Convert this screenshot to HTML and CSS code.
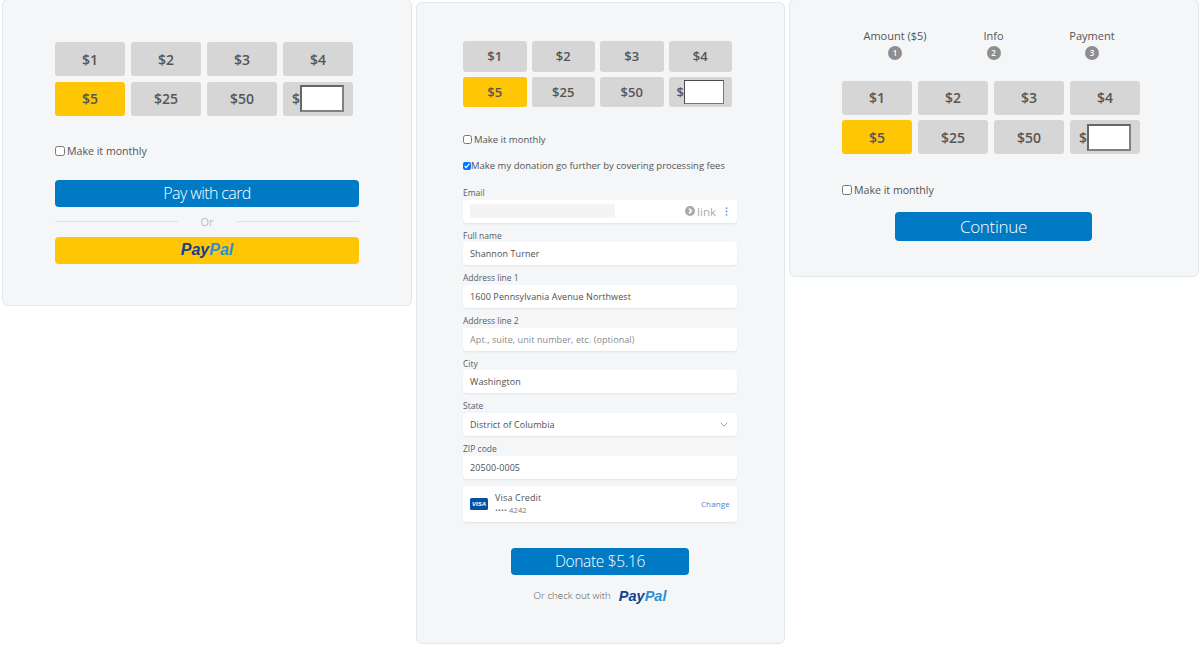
FILE: index.html
```html
<!DOCTYPE html>
<html lang="en">
<head>
<meta charset="utf-8">
<title>Donate</title>
<link rel="stylesheet" href="styles.css">
</head>
<body>
<div class="page">
  <section class="card card-a">
    <div class="amounts">
      <div class="amt">$1</div><div class="amt">$2</div><div class="amt">$3</div><div class="amt">$4</div>
      <div class="amt on">$5</div><div class="amt">$25</div><div class="amt">$50</div>
      <div class="amt other"><span>$</span><input class="other-input" type="text" aria-label="Other amount"></div>
    </div>
    <label class="check monthly"><input type="checkbox">Make it monthly</label>
    <div class="btn btn-pay">Pay with card</div>
    <div class="or"><span>Or</span></div>
    <div class="btn btn-paypal"><span class="pp"><b>Pay</b><i>Pal</i></span></div>
  </section>

  <section class="card card-b">
    <div class="amounts">
      <div class="amt">$1</div><div class="amt">$2</div><div class="amt">$3</div><div class="amt">$4</div>
      <div class="amt on">$5</div><div class="amt">$25</div><div class="amt">$50</div>
      <div class="amt other"><span>$</span><input class="other-input" type="text" aria-label="Other amount"></div>
    </div>
    <label class="check monthly"><input type="checkbox">Make it monthly</label>
    <label class="check fees"><input type="checkbox" checked>Make my donation go further by covering processing fees</label>
    <div class="field">
      <div class="lbl">Email</div>
      <div class="box">
        <span class="mask"></span>
        <span class="link">
          <svg class="link-ic" viewBox="0 0 10 10"><circle cx="5" cy="5" r="5" fill="#a9a9a9"/><path d="M4 2.6 6.4 5 4 7.4" fill="none" stroke="#fff" stroke-width="1.6"/></svg>link
        </span>
        <svg class="dots" viewBox="0 0 3 9"><circle cx="1.5" cy="1.2" r=".9"/><circle cx="1.5" cy="4.5" r=".9"/><circle cx="1.5" cy="7.8" r=".9"/></svg>
      </div>
    </div>
    <div class="field"><div class="lbl">Full name</div><div class="box">Shannon Turner</div></div>
    <div class="field"><div class="lbl">Address line 1</div><div class="box">1600 Pennsylvania Avenue Northwest</div></div>
    <div class="field"><div class="lbl">Address line 2</div><div class="box ph">Apt., suite, unit number, etc. (optional)</div></div>
    <div class="field"><div class="lbl">City</div><div class="box">Washington</div></div>
    <div class="field"><div class="lbl">State</div>
      <div class="box">District of Columbia
        <svg class="chev" viewBox="0 0 8 5"><path d="M.7.8 4 4 7.3.8" fill="none" stroke="#8a8f96" stroke-width=".8"/></svg>
      </div>
    </div>
    <div class="field"><div class="lbl">ZIP code</div><div class="box">20500-0005</div></div>
    <div class="pay-card">
      <span class="visa">VISA</span>
      <div class="pay-info"><div class="pay-name">Visa Credit</div><div class="pay-num">•••• 4242</div></div>
      <span class="change">Change</span>
    </div>
    <div class="btn btn-donate">Donate $5.16</div>
    <div class="alt">Or check out with <span class="pp"><b>Pay</b><i>Pal</i></span></div>
  </section>

  <section class="card card-c">
    <div class="steps">
      <div class="step">Amount ($5)<span class="num">1</span></div>
      <div class="step">Info<span class="num">2</span></div>
      <div class="step">Payment<span class="num">3</span></div>
    </div>
    <div class="amounts">
      <div class="amt">$1</div><div class="amt">$2</div><div class="amt">$3</div><div class="amt">$4</div>
      <div class="amt on">$5</div><div class="amt">$25</div><div class="amt">$50</div>
      <div class="amt other"><span>$</span><input class="other-input" type="text" aria-label="Other amount"></div>
    </div>
    <label class="check monthly"><input type="checkbox">Make it monthly</label>
    <div class="btn btn-continue">Continue</div>
  </section>
</div>
</body>
</html>
```
FILE: styles.css
```css
* { box-sizing: border-box; }
html, body { margin: 0; padding: 0; background: #fff; }
body {
  font-family: "Open Sans", "Liberation Sans", sans-serif;
  color: #4f4f4f;
  height: 652px;
  overflow: hidden;
}
.page {
  display: flex;
  align-items: flex-start;
  gap: 4px;
  padding-left: 2px;
}
.card {
  flex: none;
  background: #f4f6f8;
  border: 1px solid #dfe8eb;
  border-radius: 6px;
}
.card-a { width: 410px; height: 307px; margin-top: -1px; padding: 42px 52px 0; }
.card-b { width: 369px; height: 642px; margin-top: 2px; padding: 38px 46px 0; }
.card-c { width: 410px; height: 278px; margin-top: -1px; padding: 29px 52px 0; }

.amounts {
  display: grid;
  grid-template-columns: repeat(4, 70px);
  grid-auto-rows: 34px;
  column-gap: 6px;
  row-gap: 5.5px;
}
.amt {
  display: flex;
  align-items: center;
  justify-content: center;
  background: #d6d6d6;
  border-radius: 3px;
  font-size: 14px;
  font-weight: 600;
  color: #555;
}
.amt.on { background: #ffc605; }
.amt.other { justify-content: flex-start; padding-left: 9px; }
.other-input {
  width: 44px;
  height: 27px;
  margin: 0;
  padding: 0;
  background: #fff;
  border-radius: 0;
  border: 2px solid #808080;
  border-top-color: #666;
  border-left-color: #666;
}
.check {
  display: flex;
  align-items: center;
  white-space: nowrap;
  font-size: 10.6px;
  line-height: 15px;
  color: #555;
}
.check input {
  width: 10px;
  height: 10px;
  margin: 0 2px 0 0;
  flex: none;
}
.card-a .monthly { margin-top: 28px; }
.card-c .monthly { margin-top: 28.5px; }

.btn {
  display: flex;
  align-items: center;
  justify-content: center;
  border-radius: 4px;
  color: #fff;
}
.btn-pay {
  margin-top: 21px;
  width: 304px;
  height: 27px;
  background: #007ac5;
  font-size: 16px;
  font-weight: 350;
  letter-spacing: -.6px;
}
.or {
  display: flex;
  align-items: center;
  gap: 22px;
  width: 304px;
  height: 30px;
  font-size: 11px;
  color: #bcbcbc;
  line-height: 14px;
  justify-content: center;
}
.or::before, .or::after { content: ""; flex: 1; height: 1px; background: #dfe3e6; }
.btn-paypal {
  width: 304px;
  height: 27px;
  background: #ffc605;
}
.pp {
  font-family: "Liberation Sans", Arial, sans-serif;
  font-weight: 700;
  font-style: italic;
  font-size: 16px;
  letter-spacing: 0;
}
.pp b { color: #123f8c; }
.pp i { color: #2f8fd4; }

.card-b .amounts {
  grid-template-columns: repeat(4, 63.5px);
  grid-auto-rows: 30.5px;
  column-gap: 5px;
  row-gap: 5px;
}
.card-b .amt { font-size: 13px; }
.card-b .amt.other { padding-left: 8px; }
.card-b .other-input { width: 40px; height: 24px; border-width: 1px; border-color: #4a4a4a #777 #777 #4a4a4a; }
.card-b .monthly { margin-top: 25px; }
.card-b .fees { margin-top: 11px; }
.card-b .check { font-size: 9.5px; line-height: 15px; }
.card-b .check input { margin-right: 2px; width: 9px; height: 9px; }
.card-b .fees input { margin-right: 0; width: 8px; height: 8px; }

.field { width: 274px; }
.fees + .field { margin-top: 14px; }
.field .lbl {
  font-size: 8.5px;
  line-height: 11px;
  height: 12.5px;
  color: #5c5c5c;
}
.box {
  position: relative;
  display: flex;
  align-items: center;
  height: 23px;
  padding: 0 7px;
  margin-bottom: 7.2px;
  background: #fff;
  border-radius: 4px;
  box-shadow: 0 1px 2px rgba(0, 0, 0, .08);
  font-size: 9px;
  color: #4f4f4f;
  letter-spacing: .01em;
}
.box.ph { color: #8a8a8a; }
.mask { width: 145px; height: 14px; background: #f4f4f4; }
.link {
  display: flex;
  align-items: center;
  gap: 2px;
  margin-left: auto;
  margin-right: 9px;
  font-size: 11.5px;
  font-weight: 500;
  color: #a9a9a9;
  letter-spacing: 0;
}
.link-ic { width: 10px; height: 10px; }
.dots { width: 3px; height: 9px; fill: #6f8fe0; margin-right: 2px; }
.chev { width: 8px; height: 5px; margin-left: auto; margin-right: 2px; }

.pay-card {
  display: flex;
  align-items: center;
  width: 274px;
  height: 36px;
  padding: 0 7px;
  background: #fff;
  border-radius: 4px;
  box-shadow: 0 1px 2px rgba(0, 0, 0, .08);
}
.visa {
  width: 18px;
  height: 12px;
  background: #0a4f9e;
  border-radius: 1.5px;
  color: #fff;
  font-family: "Liberation Sans", Arial, sans-serif;
  font-size: 6px;
  font-weight: 700;
  font-style: italic;
  line-height: 12px;
  text-align: center;
}
.pay-info { margin-left: 7px; letter-spacing: .01em; }
.pay-name { font-size: 9px; line-height: 12px; color: #555; }
.pay-num { font-size: 7.5px; line-height: 12px; color: #777; }
.change { margin-left: auto; font-size: 8px; color: #4a7fd6; letter-spacing: .02em; }

.btn-donate {
  width: 178px;
  height: 27px;
  margin: 26px 0 0 48px;
  background: #007ac5;
  font-size: 15.5px;
  font-weight: 350;
  letter-spacing: -.35px;
}
.alt {
  display: flex;
  align-items: center;
  justify-content: center;
  gap: 8px;
  width: 274px;
  margin-top: 11.5px;
  height: 19px;
  font-size: 9.8px;
  font-weight: 300;
  color: #555;
}
.alt .pp { font-size: 14.5px; }

.steps {
  display: grid;
  grid-template-columns: repeat(3, 98.5px);
  margin-left: 3.75px;
}
.step {
  display: flex;
  flex-direction: column;
  align-items: center;
  font-size: 11px;
  line-height: 14px;
  color: #555;
}
.num {
  display: flex;
  align-items: center;
  justify-content: center;
  width: 14px;
  height: 14px;
  margin-top: 3px;
  border-radius: 50%;
  background: #8e8e8e;
  color: #fff;
  font-size: 8px;
  font-weight: 600;
}
.card-c .amounts { margin-top: 20.5px; }
.btn-continue {
  width: 197px;
  height: 29.5px;
  margin: 14px 0 0 53px;
  background: #007ac5;
  font-size: 17px;
  font-weight: 350;
  letter-spacing: -.3px;
}
```
